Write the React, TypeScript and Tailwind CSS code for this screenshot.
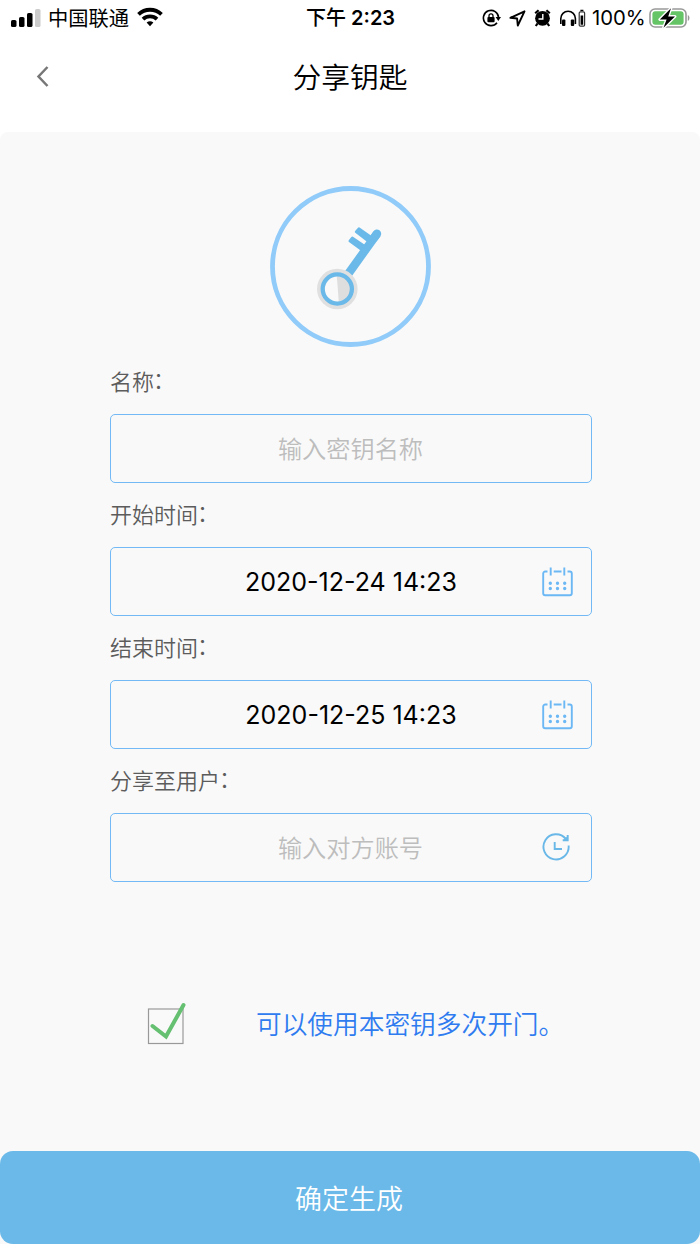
import type { ReactNode } from "react";

export default function App() {
  return (
    <div className="flex h-[1244px] w-[700px] flex-col overflow-hidden bg-white font-['Inter','Noto_Sans_CJK_SC',sans-serif] text-black">
      <StatusBar />
      <header className="grid h-[96px] grid-cols-[85px_1fr_85px] items-start">
        <button className="flex h-20 items-center justify-center">
          <svg width="14" height="22" viewBox="0 0 14 22" fill="none" stroke="#777" strokeWidth="2.5">
            <path d="M11.5 2 2.5 11.5l9 9.5" />
          </svg>
        </button>
        <h1 className="flex h-[84px] items-center justify-center text-[28.8px] font-[350]">分享钥匙</h1>
      </header>

      <main className="flex flex-1 flex-col items-center rounded-t-lg bg-[#f9f9f9] pt-[54px]">
        <KeyLogo />
        <form className="mt-[3px] ml-[2px] flex w-[482px] flex-col">
          <Field label="名称" placeholder="输入密钥名称" />
          <Field label="开始时间" value="2020-12-24 14:23" icon={<CalendarIcon />} />
          <Field label="结束时间" value="2020-12-25 14:23" icon={<CalendarIcon />} />
          <Field label="分享至用户" placeholder="输入对方账号" icon={<HistoryIcon />} />
        </form>
        <label className="mt-[113px] flex w-full items-center gap-[66px] pl-[146px]">
          <CheckBox />
          <span className="pt-1 text-[25.7px] leading-[52px] font-[350] text-[#2f7bf0]">可以使用本密钥多次开门。</span>
        </label>
      </main>

      <footer className="bg-[#f9f9f9]">
        <button className="flex h-[93px] w-full items-center justify-center rounded-[13px] bg-[#6ab9e9] pt-[5px] pr-[2px] text-[27px] font-[350] text-white">
          确定生成
        </button>
      </footer>
    </div>
  );
}

interface FieldProps {
  label: string;
  value?: string;
  placeholder?: string;
  icon?: ReactNode;
}

function Field({ label, value, placeholder, icon }: FieldProps) {
  return (
    <div className="flex h-[133px] flex-col">
      <p className="h-16 pt-[15px] text-[22px] leading-[34px] font-[350] text-[#5c5c5c]">
        {label}
        <span className="-ml-px inline-block align-[2px] leading-none">：</span>
      </p>
      <div className="grid h-[69px] grid-cols-[66px_1fr_66px] items-center rounded-[5px] border-[1.5px] border-[#72b9f5]">
        {value ? (
          <span className="col-start-2 pt-[3px] text-center text-[25px]">{value}</span>
        ) : (
          <span className="col-start-2 pt-1 pr-px text-center text-[24.2px] font-[350] text-[#bdbdbd]">{placeholder}</span>
        )}
        <span className="flex justify-center pr-[2px]">{icon}</span>
      </div>
    </div>
  );
}

function StatusBar() {
  return (
    <div className="grid h-9 grid-cols-[306px_1fr_218px] items-center">
      <div className="flex items-center pl-[11px]">
        <svg width="30" height="18" viewBox="0 0 30 18">
          <rect x="0" y="11" width="5.5" height="7" rx="1.6" />
          <rect x="8" y="8" width="5.5" height="10" rx="1.6" />
          <rect x="16" y="4" width="5.5" height="14" rx="1.6" />
          <rect x="24" y="0" width="5.5" height="18" rx="1.6" fill="#ccc" />
        </svg>
        <span className="ml-[7px] pt-[2px] text-[20.3px] leading-[34px]">中国联通</span>
        <svg className="ml-2 mb-[2px]" width="26" height="20" viewBox="0 0 26 20" fill="none" stroke="#000" strokeWidth="3.8">
          <path d="M1.500 7.400a16.500 16.500 0 0 1 23 0" />
          <path d="M6 12.200a10.200 10.200 0 0 1 14 0" />
          <path d="M9.600 15.600a5.300 5.300 0 0 1 6.800 0L13 19.200Z" fill="#000" stroke="none" />
        </svg>
      </div>
      <span className="pt-px text-[20px] leading-[35px] font-semibold whitespace-nowrap">
        <span className="font-medium">下午</span> 2:23
      </span>
      <div className="flex items-center">
        <svg width="19" height="18" viewBox="0 0 19 18">
          <path d="M16.600 8.500A7.600 7.600 0 1 0 15 13.700" fill="none" stroke="#000" strokeWidth="1.6" />
          <path d="M13.600 8h5.400l-2.700 4z" />
          <rect x="5.400" y="8" width="7.200" height="5.300" rx="1" />
          <path d="M7 8.500V6.800a2 2 0 0 1 4 0v1.700" fill="none" stroke="#000" strokeWidth="1.3" />
        </svg>
        <svg className="ml-2" width="17" height="17" viewBox="0 0 17 17" fill="none" stroke="#000" strokeWidth="1.9" strokeLinejoin="round">
          <path d="M15.500 1.300 1.400 7.800l6.700.7.700 7Z" />
        </svg>
        <svg className="ml-2" width="17" height="18" viewBox="0 0 17 18">
          <circle cx="8.500" cy="9.300" r="7.400" />
          <path d="M1.200 4.300 4.600 1.200M15.800 4.300l-3.400-3.100M3.500 14.500 1.800 17M13.500 14.500l1.700 2.500" stroke="#000" strokeWidth="2.200" />
          <path d="M8.800 5v5H4.500" fill="none" stroke="#fff" strokeWidth="1.400" />
        </svg>
        <svg className="ml-2" width="27" height="19" viewBox="0 0 27 19">
          <path d="M1.800 15V9.500a7.200 7.200 0 0 1 14.600 0V15" fill="none" stroke="#000" strokeWidth="1.600" />
          <rect x="3" y="10.500" width="3.400" height="6.500" rx="1" />
          <rect x="11.800" y="10.500" width="3.400" height="6.500" rx="1" />
          <rect x="20.200" y="2.800" width="5.400" height="14.400" rx="1.200" fill="none" stroke="#333" strokeWidth="1.200" />
          <path d="M21.400.8h3V2h-3zM21.600 6.500h2.600v9.300h-2.600z" />
        </svg>
        <span className="ml-[6px] w-[53px] text-[20.3px] leading-9">100%</span>
        <svg className="ml-1" width="42" height="22" viewBox="0 0 42 22">
          <rect x="1" y="2" width="36" height="18" rx="5" fill="#fff" stroke="#999" strokeWidth="1.6" />
          <rect x="3.4" y="4.3" width="31.2" height="13.4" rx="3" fill="#65c466" />
          <path d="M38.800 8v6c2.200-.8 2.200-5.200 0-6Z" fill="#999" />
          <path d="M22 1.200 10.800 12.600h6.800L14.500 20.800 26 9.400h-6.800Z" stroke="#fff" strokeWidth="2.800" strokeLinejoin="round" paintOrder="stroke" />
        </svg>
      </div>
    </div>
  );
}

function KeyLogo() {
  return (
    <svg className="shrink-0" width="161" height="161" viewBox="0 0 161 161" fill="none">
      <circle cx="80.5" cy="80.5" r="78" stroke="#90cbf9" strokeWidth="4.8" />
      <g stroke="#6ab9e9">
        <path d="m76 91 31-43.300" strokeWidth="8.400" />
        <path d="m104 51.900 3-4.200" strokeWidth="8.400" strokeLinecap="round" />
        <g fill="#6ab9e9" strokeWidth="2.400" strokeLinejoin="round">
          <path d="m86 45.800 2.900-3.200L101 51l-3 4Z" />
          <path d="m79.700 55 2.600-3.200L94.500 60 92 64Z" />
        </g>
      </g>
      <circle cx="67.300" cy="103" r="20.300" fill="#e0e0e0" />
      <circle cx="67.300" cy="103" r="13" fill="#f9f9f9" />
      <path d="M66.800 90a13 13 0 0 1 2 26Z" fill="#dedede" />
      <circle cx="67.300" cy="103" r="14.600" stroke="#6ab9e9" strokeWidth="4.300" />
    </svg>
  );
}

function CalendarIcon() {
  return (
    <svg width="31" height="30" viewBox="0 0 31 30" fill="none" stroke="#6cb8f5" strokeWidth="1.9">
      <path d="M5.500 4.500H3.200a2 2 0 0 0-2 2v19.800a2 2 0 0 0 2 2h24.600a2 2 0 0 0 2-2V6.500a2 2 0 0 0-2-2h-2.300M11.700 4.500h7.800" />
      <path d="M8.700.5v8M22.300.5v8" />
      <path
        d="M8.300 16.300h.01M15.500 16.300h.01M22.700 16.300h.01M8.300 21.500h.01M15.500 21.500h.01M22.700 21.500h.01"
        strokeWidth="3.400"
        strokeLinecap="round"
      />
    </svg>
  );
}

function HistoryIcon() {
  return (
    <svg className="mr-[3px] mb-[2px]" width="28" height="29" viewBox="0 0 28 29" fill="none" stroke="#69b8e8" strokeWidth="1.9">
      <path d="M26.600 13.500A12.600 12.600 0 1 1 23.800 6.800" />
      <path d="M25.700 3v5.300h-5" />
      <path d="m23 6 2.500-1.500v3.800h-4Z" fill="#69b8e8" stroke="none" />
      <path d="M12.700 10v7h7.300" />
    </svg>
  );
}

function CheckBox() {
  return (
    <svg width="44" height="44" viewBox="0 0 44 44" fill="none">
      <rect x="2.500" y="8" width="34.500" height="34.500" stroke="#999" strokeWidth="1.200" />
      <path d="m6.500 25 13.500 10.500L37.500 4" stroke="#66c071" strokeWidth="4" strokeLinecap="round" />
    </svg>
  );
}
